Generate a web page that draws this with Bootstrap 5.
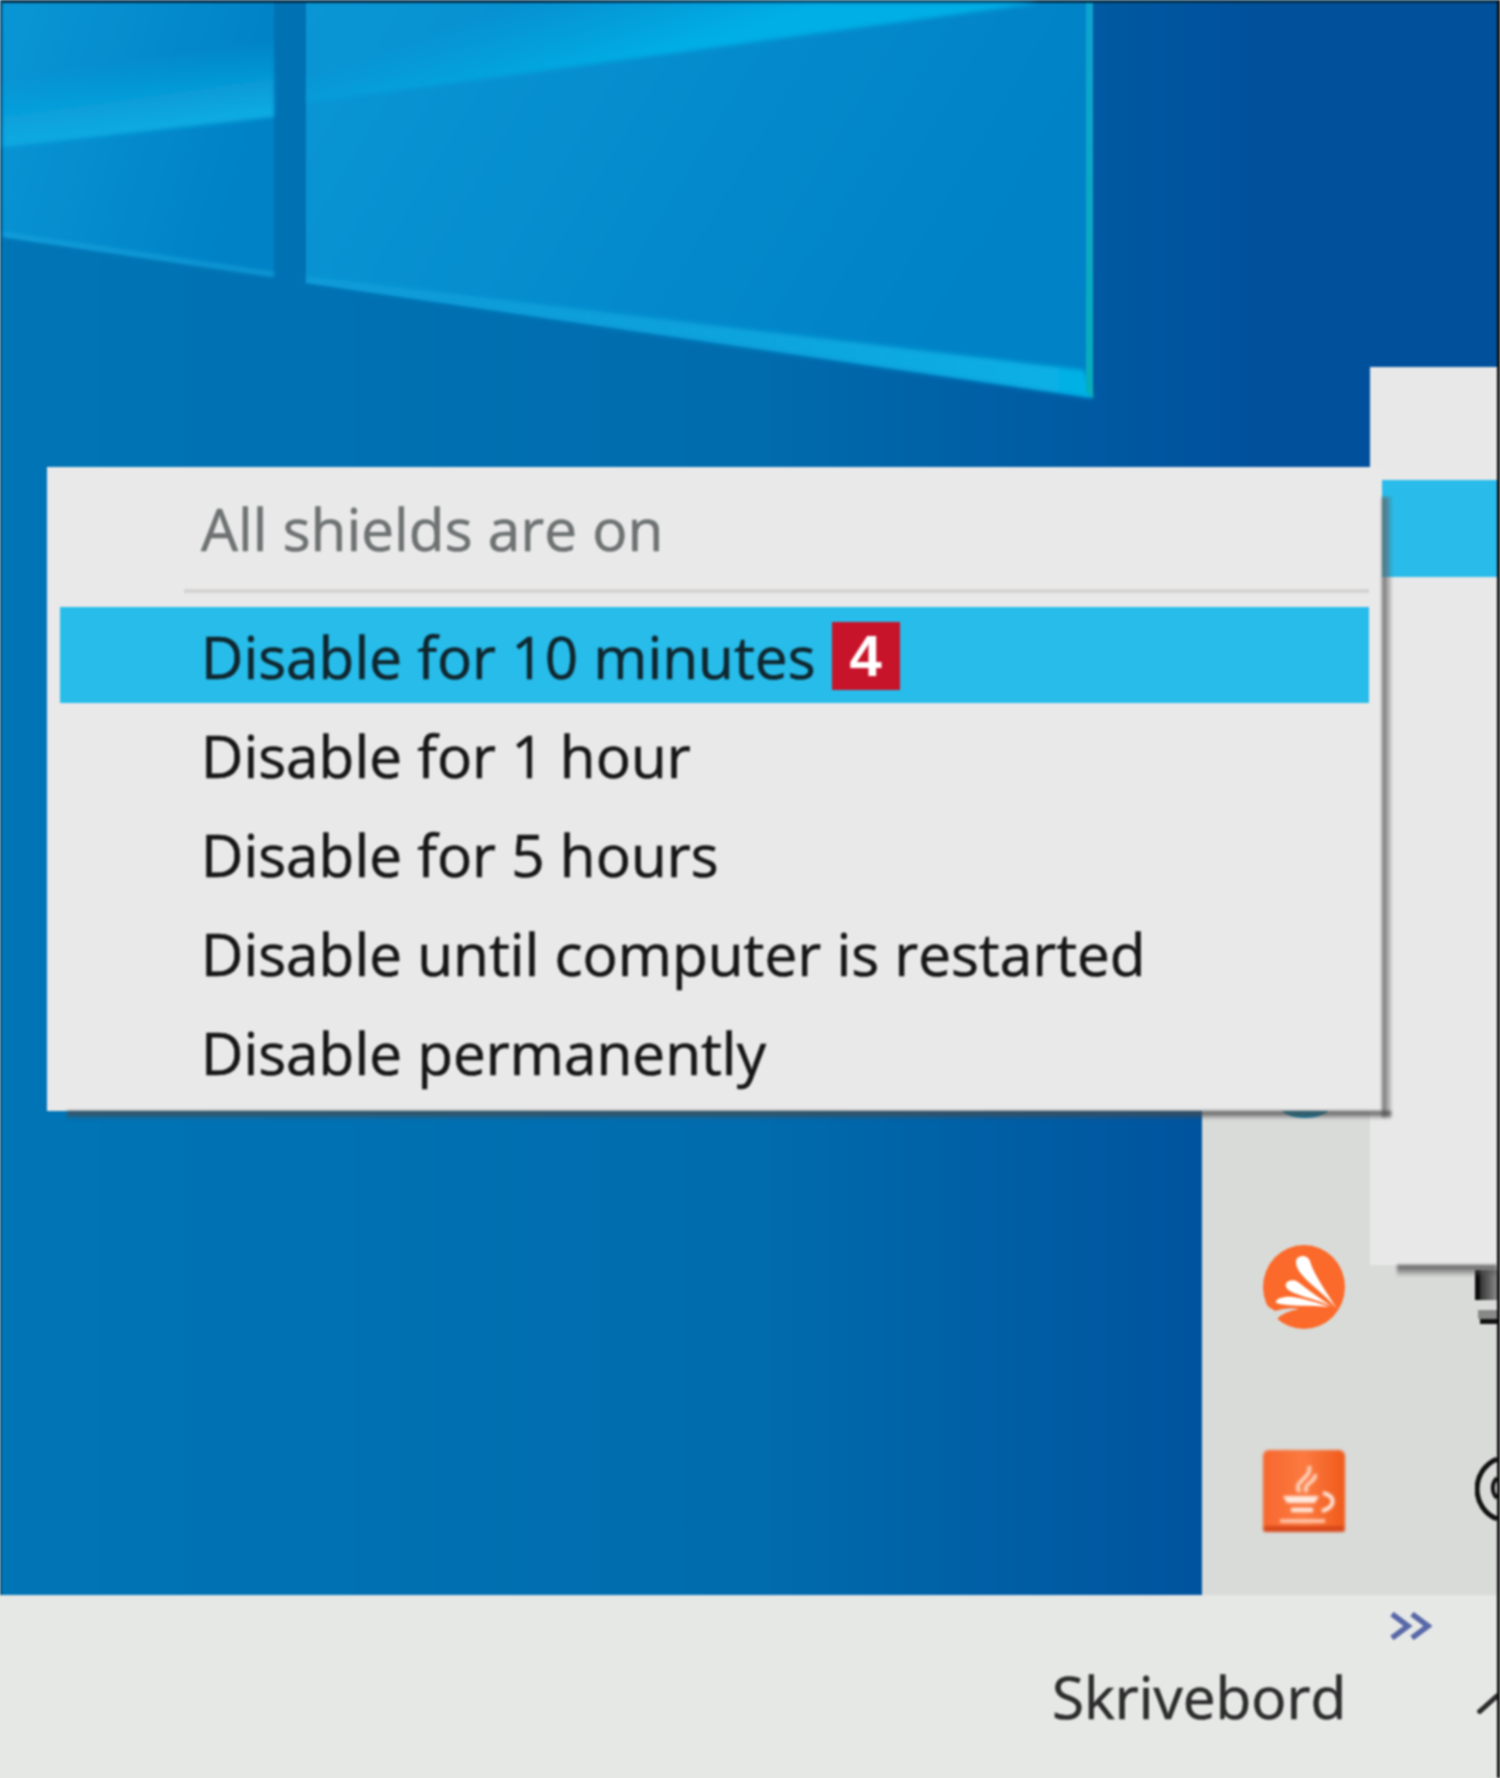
<!DOCTYPE html>
<html lang="en">
<head>
<meta charset="UTF-8">
<title>All shields are on</title>
<link href="https://cdn.jsdelivr.net/npm/bootstrap@5.3.3/dist/css/bootstrap.min.css" rel="stylesheet">
<style>
  html, body { height: 100%; }
  body { font-family: "Open Sans", "Liberation Sans", sans-serif; color: #161616; background: #e6e8e6; overflow: hidden; }
  .screen { width: 1500px; height: 1778px; position: relative; border-right: 3px solid #0c0c0c; filter: blur(.8px); }
  .desk { height: 1595px; position: relative; background: linear-gradient(90deg, #0075b6 0%, #006cae 50%, #00509c 85%); }
  .wall { position: absolute; inset: 0; width: 1497px; height: 1595px; }
  .tray { position: relative; width: 295px; height: 595px; background: #d9dbd9; padding-left: 61px; }
  .traycol { width: 82px; padding-top: 111px; }
  .traycol2 { width: 22px; margin-left: 130px; padding-top: 270px; }
  .sliver { display: block; width: 50px; height: 9px; margin: 0 0 125px 17px; }
  .scatter { display: block; width: 82px; height: 84px; margin-bottom: 121px; filter: blur(.5px); }
  .javaicon { display: block; width: 82px; height: 82px; filter: blur(.8px); }
  .netico { display: block; width: 22px; height: 56px; margin-bottom: 130px; }
  .clockico { display: block; width: 22px; height: 68px; }
  .taskbar { height: 183px; background: #e6e8e6; position: relative; }
  .showdesk { font-size: 58.5px; line-height: 1; color: #2c2c2c; padding: 72px 0 0 1052px; -webkit-text-stroke: .6px #2c2c2c; }
  .chev { position: absolute; left: 1390px; top: 17px; width: 42px; height: 28px; }
  .upchev { position: absolute; left: 1477px; top: 97px; width: 20px; height: 22px; }
  .backmenu { position: absolute; left: 1370px; top: 367px; width: 127px; height: 898px; background: #e8e8e8; padding-top: 113px; }
  .backmenu::after { content: ""; position: absolute; left: 27px; right: 0; bottom: -11px; height: 11px; background: linear-gradient(#555, rgba(90,90,90,.1)); filter: blur(1.5px); }
  .backsel { height: 97px; background: #29bbe9; }
  .ctxmenu { position: absolute; left: 47px; top: 467px; width: 1335px; height: 644px; background: #e9e9e9; padding: 13px 13px 0; font-size: 58.5px; -webkit-text-stroke: .6px currentColor; }
  .ctxmenu::before { content: ""; position: absolute; left: 100%; top: 30px; bottom: -6px; width: 10px; background: linear-gradient(90deg, #666, rgba(90,90,90,.1)); filter: blur(1.5px); }
  .ctxmenu::after { content: ""; position: absolute; left: 20px; right: -9px; top: 100%; height: 8px; background: linear-gradient(#4a4a4a, rgba(70,70,70,.1)); filter: blur(1.5px); }
  .ctxhead { color: #6e7272; height: 113px; padding: 5px 0 16px 141px; border-bottom: 4px solid #d5d3d2; position: relative; }
  .ctxhead::after { content: ""; position: absolute; left: 0; width: 124px; bottom: -4px; height: 4px; background: #e9e9e9; }
  .ctxitem { padding-left: 141px; height: 99px; }
  .ctxitem.sel { background: #27bcea; height: 96px; margin: 14px 0 3px; padding-top: 3px; color: #10262e; }
  .stepnum { width: 68px; height: 68px; margin-left: 16px; background: #c8142a; color: #fff; font: 700 58px/1 "Liberation Sans", sans-serif; -webkit-text-stroke: 0; margin-top: -2px; }
</style>
</head>
<body>
<div class="screen">
  <div class="desk d-flex justify-content-end align-items-end">
    <svg class="wall" viewBox="0 0 1497 1595">
      <defs>
        <linearGradient id="pane" x1="0" y1="0" x2="1" y2="0.3">
          <stop offset="0" stop-color="#0a96d5"/>
          <stop offset="1" stop-color="#0082c6"/>
        </linearGradient>
        <linearGradient id="bandr" gradientUnits="userSpaceOnUse" x1="620" y1="-30" x2="650" y2="60">
          <stop offset="0" stop-color="#04afe6" stop-opacity="0"/>
          <stop offset="1" stop-color="#04afe6"/>
        </linearGradient>
        <linearGradient id="bandl" gradientUnits="userSpaceOnUse" x1="130" y1="60" x2="140" y2="130">
          <stop offset="0" stop-color="#0cabe2" stop-opacity="0"/>
          <stop offset="1" stop-color="#0cabe2"/>
        </linearGradient>
        <linearGradient id="glow" gradientUnits="userSpaceOnUse" x1="306" y1="0" x2="1093" y2="0">
          <stop offset="0" stop-color="#1aa4de" stop-opacity=".5"/>
          <stop offset="1" stop-color="#06b2e6"/>
        </linearGradient>
        <linearGradient id="edge" x1="0" y1="0" x2="0" y2="1">
          <stop offset="0" stop-color="#0ea4d0"/>
          <stop offset="1" stop-color="#08aebb"/>
        </linearGradient>
        <filter id="soft"><feGaussianBlur stdDeviation="2"/></filter>
      </defs>
      <rect width="1497" height="3" fill="#03304d"/>
      <rect width="2" height="1595" fill="#03507a"/>
      <polygon points="3,3 274,3 274,277 3,237" fill="url(#pane)"/>
      <polygon points="3,30 274,30 274,117 3,147" fill="url(#bandl)" filter="url(#soft)"/>
      <polygon points="3,232 274,272 274,277 3,237" fill="#1aa8e0" opacity=".6" filter="url(#soft)"/>
      <polygon points="306,3 1093,3 1093,398 306,283" fill="url(#pane)"/>
      <polygon points="306,3 1040,3 306,103" fill="url(#bandr)" filter="url(#soft)"/>
      <polygon points="306,276 1084,370 1093,398 306,283" fill="url(#glow)" filter="url(#soft)"/>
      <polygon points="1086,3 1093,3 1093,398 1086,392" fill="url(#edge)"/>
    </svg>
    <div class="tray d-flex">
      <div class="traycol">
        <svg class="sliver" viewBox="0 0 50 9"><ellipse cx="25" cy="-3" rx="24" ry="10" fill="#0a7fa8"/></svg>
        <svg class="scatter" viewBox="0 0 82 84">
          <ellipse cx="41" cy="42" rx="41" ry="42" fill="#fb6a2a"/>
          <path d="M0 58 L12 66 Q24 62 36 64 Q20 67 14 74 L0 74Z" fill="#d9dbd9"/>
          <path d="M74 64 C60 46 34 32 33 18 C32 10 44 8 47 16 C50 28 64 48 74 64Z" fill="#fff"/>
          <path d="M72 63 C56 54 26 50 23 42 C21 36 30 33 35 37 C44 44 60 56 72 63Z" fill="#fff"/>
          <path d="M66 62 C50 60 26 62 13 58 C12 53 22 51 30 52 C42 54 56 58 66 62Z" fill="#fff"/>
        </svg>
        <svg class="javaicon" viewBox="0 0 82 82">
          <defs>
            <linearGradient id="javabg" x1="0" y1="0" x2="1" y2="0">
              <stop offset="0" stop-color="#f8672e"/>
              <stop offset=".5" stop-color="#fb7a40"/>
              <stop offset="1" stop-color="#f05a1a"/>
            </linearGradient>
          </defs>
          <rect width="82" height="82" rx="6" fill="url(#javabg)"/>
          <rect y="76" width="82" height="6" rx="3" fill="#d8481a"/>
          <path d="M37 42 C28 32 50 28 46 16 M44 42 C38 34 54 32 52 24" fill="none" stroke="#ffd2bc" stroke-width="4"/>
          <path d="M20 46 H56 L52 53 H24Z" fill="#ffe9df"/>
          <path d="M28 60 H50" stroke="#ffe9df" stroke-width="4.5"/>
          <path d="M60 43 C73 46 73 57 59 61" fill="none" stroke="#ffe9df" stroke-width="4"/>
          <path d="M17 71 H62" stroke="#ffcdb6" stroke-width="3.5"/>
        </svg>
      </div>
      <div class="traycol2">
        <svg class="netico" viewBox="0 0 22 56">
          <defs>
            <linearGradient id="netbg" x1="0" y1="0" x2="1" y2="0">
              <stop offset="0" stop-color="#333"/>
              <stop offset="1" stop-color="#8a8a8a"/>
            </linearGradient>
          </defs>
          <rect x="5" width="17" height="30" fill="url(#netbg)"/>
          <rect width="5" height="30" fill="#0c0c0c"/>
          <rect x="3" y="40" width="19" height="9" fill="#888"/>
          <rect x="5" y="49" width="17" height="5" fill="#111"/>
        </svg>
        <svg class="clockico" viewBox="0 0 22 68" fill="none" stroke="#111" stroke-width="5">
          <path d="M22 3 A32.5 32.5 0 0 0 22 63"/>
          <path d="M22 22 A14 14 0 0 0 22 42" stroke-width="4"/>
        </svg>
      </div>
    </div>
  </div>
  <div class="taskbar">
    <svg class="chev" viewBox="0 0 42 28" fill="none" stroke="#5867a8" stroke-width="5.5"><path d="M2 2 L18 14 L2 26M22 2 L38 14 L22 26"/></svg>
    <div class="showdesk">Skrivebord</div>
    <svg class="upchev" viewBox="0 0 20 22" fill="none" stroke="#2b2b2b" stroke-width="5"><path d="M1 21 L21 3"/></svg>
  </div>
  <div class="backmenu"><div class="backsel"></div></div>
  <div class="ctxmenu">
    <div class="ctxhead d-flex align-items-center">All shields are on</div>
    <div class="ctxitem sel d-flex align-items-center">Disable for 10 minutes<span class="stepnum d-inline-flex align-items-center justify-content-center">4</span></div>
    <div class="ctxitem d-flex align-items-center">Disable for 1 hour</div>
    <div class="ctxitem d-flex align-items-center">Disable for 5 hours</div>
    <div class="ctxitem d-flex align-items-center">Disable until computer is restarted</div>
    <div class="ctxitem d-flex align-items-center">Disable permanently</div>
  </div>
</div>
<script src="https://cdn.jsdelivr.net/npm/bootstrap@5.3.3/dist/js/bootstrap.bundle.min.js"></script>
</body>
</html>
